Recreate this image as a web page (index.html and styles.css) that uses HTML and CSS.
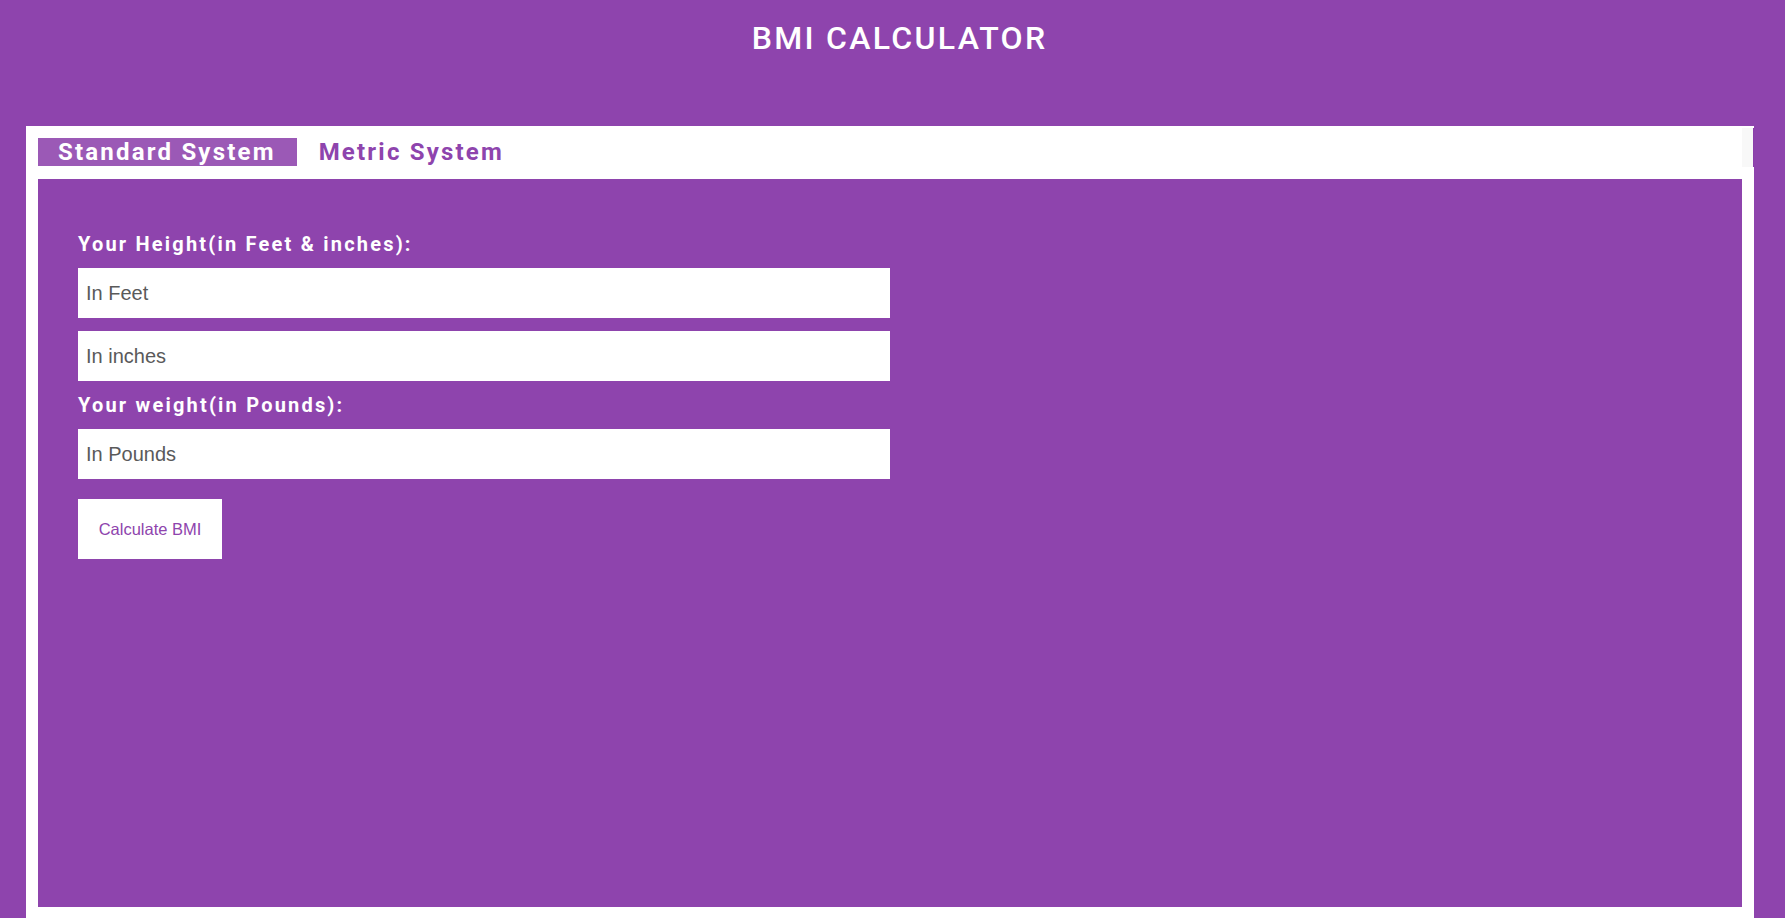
FILE: index.html
```html
<!DOCTYPE html>
<html lang="en">
<head>
<meta charset="utf-8">
<title>BMI Calculator</title>
<link rel="stylesheet" href="styles.css">
</head>
<body>
  <header class="site-header">
    <h1 class="site-title">BMI CALCULATOR</h1>
  </header>
  <main class="card">
    <nav class="tabs">
      <button class="tab tab-active" type="button">Standard System</button>
      <button class="tab" type="button">Metric System</button>
      <div class="tabs-scroll"></div>
    </nav>
    <section class="panel">
      <form class="bmi-form">
        <label class="field-label" for="feet">Your Height(in Feet &amp; inches):</label>
        <input class="field" id="feet" type="text" placeholder="In Feet">
        <input class="field field-gap" id="inches" type="text" placeholder="In inches">
        <label class="field-label" for="pounds">Your weight(in Pounds):</label>
        <input class="field" id="pounds" type="text" placeholder="In Pounds">
        <button class="calc-btn" type="button">Calculate BMI</button>
      </form>
    </section>
  </main>
</body>
</html>
```

FILE: styles.css
```css
html, body {
  margin: 0;
  padding: 0;
}

body {
  background: #8e44ad;
  font-family: Roboto, "Liberation Sans", Arial, sans-serif;
  min-height: 960px;
}

.site-header {
  height: 126px;
  display: flex;
  justify-content: center;
  padding-left: 14px;
}

.site-title {
  margin: 0;
  padding-top: 19px;
  color: #ffffff;
  font-family: Roboto, sans-serif;
  font-size: 32px;
  font-weight: 500;
  letter-spacing: 2.3px;
  line-height: 38px;
  height: 38px;
}

.card {
  display: block;
  margin-left: 26px;
  width: 1704px;
  background: #ffffff;
  padding: 12px 12px 40px 12px;
}

.tabs {
  display: flex;
  align-items: flex-start;
  height: 41px;
  position: relative;
}

.tab {
  border: 0;
  margin: 0;
  background: transparent;
  font-family: Roboto, sans-serif;
  font-size: 24px;
  font-weight: 700;
  letter-spacing: 2.2px;
  color: #8e44ad;
  height: 28px;
  line-height: 28px;
  padding: 0 21px 0 20px;
  cursor: pointer;
}

.tab-active {
  background: #9b59b6;
  color: #ffffff;
  margin-right: 2px;
}

.tabs-scroll {
  position: absolute;
  right: -12px;
  top: -10px;
  width: 11px;
  height: 39px;
  background: #f8f8f8;
  border-right: 1px solid #8a40aa;
}

.panel {
  background: #8e44ad;
  height: 728px;
  box-sizing: border-box;
  padding: 54px 40px 40px 40px;
}

.bmi-form {
  display: flex;
  flex-direction: column;
  align-items: flex-start;
  width: 50%;
}

.field-label {
  color: #ffffff;
  font-family: Roboto, sans-serif;
  font-size: 20px;
  font-weight: 700;
  letter-spacing: 2.2px;
  line-height: 23px;
  margin-bottom: 12px;
}

.field {
  box-sizing: border-box;
  width: 100%;
  height: 50px;
  border: 0;
  outline: none;
  background: #ffffff;
  padding: 0 8px;
  font-family: "Liberation Sans", Arial, sans-serif;
  font-size: 20px;
  color: #333;
}

.field::placeholder {
  color: #5a5a5a;
}

.field-gap {
  margin-top: 13px;
  margin-bottom: 13px;
}

.calc-btn {
  margin-top: 20px;
  width: 144px;
  height: 60px;
  border: 0;
  background: #ffffff;
  color: #8e44ad;
  font-family: "Liberation Sans", Arial, sans-serif;
  font-size: 16.5px;
  padding: 0;
  cursor: pointer;
}
```
